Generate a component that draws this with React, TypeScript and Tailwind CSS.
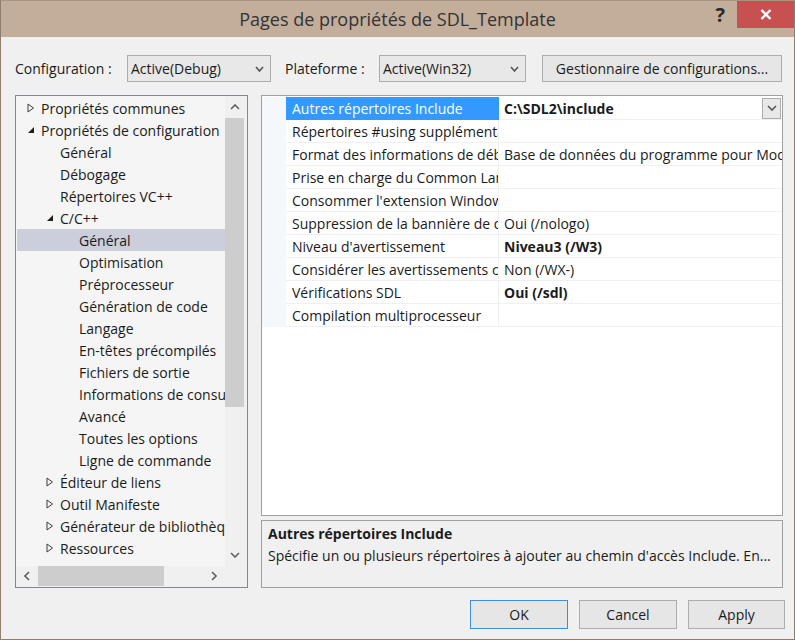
import React from "react";

const font = { fontFamily: '"Open Sans", "Noto Sans", sans-serif' };

function Collapsed() {
  return (
    <svg width="8" height="10" viewBox="0 0 8 10" className="shrink-0">
      <polygon points="1,1 6.5,5 1,9" fill="none" stroke="#3c3c3c" strokeWidth="1" />
    </svg>
  );
}
function Expanded() {
  return (
    <svg width="8" height="10" viewBox="0 0 8 10" className="shrink-0">
      <polygon points="7,2 7,8 1,8" fill="#1e1e1e" />
    </svg>
  );
}
function Chevron({ dir = "down", color = "#606060", w = 10, h = 6 }: { dir?: string; color?: string; w?: number; h?: number }) {
  const paths: Record<string, string> = {
    down: `M1,1 L${w / 2},${h - 1} L${w - 1},1`,
    up: `M1,${h - 1} L${w / 2},1 L${w - 1},${h - 1}`,
  };
  return (
    <svg width={w} height={h} viewBox={`0 0 ${w} ${h}`}>
      <path d={paths[dir]} fill="none" stroke={color} strokeWidth="1.6" />
    </svg>
  );
}
function ChevronSide({ dir }: { dir: "left" | "right" }) {
  return (
    <svg width="6" height="10" viewBox="0 0 6 10">
      <path d={dir === "left" ? "M5,1 L1,5 L5,9" : "M1,1 L5,5 L1,9"} fill="none" stroke="#606060" strokeWidth="1.6" />
    </svg>
  );
}

type TreeItem = { label: string; level: number; icon?: "c" | "e"; selected?: boolean };
const tree: TreeItem[] = [
  { label: "Propriétés communes", level: 0, icon: "c" },
  { label: "Propriétés de configuration", level: 0, icon: "e" },
  { label: "Général", level: 1 },
  { label: "Débogage", level: 1 },
  { label: "Répertoires VC++", level: 1 },
  { label: "C/C++", level: 1, icon: "e" },
  { label: "Général", level: 2, selected: true },
  { label: "Optimisation", level: 2 },
  { label: "Préprocesseur", level: 2 },
  { label: "Génération de code", level: 2 },
  { label: "Langage", level: 2 },
  { label: "En-têtes précompilés", level: 2 },
  { label: "Fichiers de sortie", level: 2 },
  { label: "Informations de consultation", level: 2 },
  { label: "Avancé", level: 2 },
  { label: "Toutes les options", level: 2 },
  { label: "Ligne de commande", level: 2 },
  { label: "Éditeur de liens", level: 1, icon: "c" },
  { label: "Outil Manifeste", level: 1, icon: "c" },
  { label: "Générateur de bibliothèques", level: 1, icon: "c" },
  { label: "Ressources", level: 1, icon: "c" },
];

const rows: { name: string; value: string; bold?: boolean }[] = [
  { name: "Autres répertoires Include", value: "C:\\SDL2\\include", bold: true },
  { name: "Répertoires #using supplémentaires", value: "" },
  { name: "Format des informations de débogage", value: "Base de données du programme pour Modifier et continuer (/ZI)" },
  { name: "Prise en charge du Common Language RunTime", value: "" },
  { name: "Consommer l'extension Windows Runtime", value: "" },
  { name: "Suppression de la bannière de démarrage", value: "Oui (/nologo)" },
  { name: "Niveau d'avertissement", value: "Niveau3 (/W3)", bold: true },
  { name: "Considérer les avertissements comme des erreurs", value: "Non (/WX-)" },
  { name: "Vérifications SDL", value: "Oui (/sdl)", bold: true },
  { name: "Compilation multiprocesseur", value: "" },
];

const indent = ["pl-[10px]", "pl-[29px]", "pl-[48px]"];

export default function App() {
  return (
    <div style={font} className="w-[795px] h-[640px] flex flex-col bg-[#c3ae9b] border-x border-b border-[#8f7d6d] border-t border-t-[#a8937f] text-[14px] text-[#1b1b1b] overflow-hidden">
      {/* Title bar */}
      <div className="h-[36px] shrink-0 grid grid-cols-[1fr_auto_1fr]">
        <div />
        <div className="flex items-center text-[18px] text-[#333] pt-[1px]">Pages de propriétés de SDL_Template</div>
        <div className="flex justify-end items-start">
          <div className="h-[27px] flex items-center pr-[12px] text-[20px] font-bold text-[#2a2a2a] leading-none">?</div>
          <div className="w-[57px] h-[27px] bg-[#c75050] flex items-center justify-center">
            <svg width="12" height="11" viewBox="0 0 12 11">
              <path d="M1.5,1 L10.5,10 M10.5,1 L1.5,10" stroke="#fff" strokeWidth="2.4" />
            </svg>
          </div>
        </div>
      </div>

      {/* Body */}
      <div className="flex-1 bg-[#f0f0f0] flex flex-col pl-[14px] pr-[9px] pt-[18px]">
        {/* Config row */}
        <div className="flex items-center h-[27px]">
          <span className="w-[112px]">Configuration :</span>
          <div className="w-[144px] h-[27px] border border-[#acacac] bg-[#e8e8e8] flex items-center justify-between pl-[3px] pr-[6px]">
            <span>Active(Debug)</span>
            <Chevron w={9} h={6} color="#555" />
          </div>
          <span className="ml-[14px] w-[94px]">Plateforme :</span>
          <div className="w-[147px] h-[27px] border border-[#acacac] bg-[#e8e8e8] flex items-center justify-between pl-[3px] pr-[6px]">
            <span>Active(Win32)</span>
            <Chevron w={9} h={6} color="#555" />
          </div>
          <div className="ml-[16px] w-[240px] h-[27px] border border-[#adadad] bg-[#e6e6e6] flex items-center justify-center">
            Gestionnaire de configurations...
          </div>
        </div>

        {/* Main */}
        <div className="flex mt-[13px] h-[493px]">
          {/* Tree */}
          <div className="w-[233px] h-[493px] border border-[#828790] bg-[#f5f5f5] flex flex-col overflow-hidden">
            <div className="flex flex-1 min-h-0 overflow-hidden">
              <div className="w-[209px] overflow-hidden pt-[1px] pl-[1px]">
                {tree.map((t, i) => (
                  <div
                    key={i}
                    className={`h-[22px] flex items-center whitespace-nowrap ${indent[t.level]} ${t.selected ? "bg-[#cccedb]" : ""}`}
                  >
                    <span className="w-[14px] shrink-0 flex items-center">
                      {t.icon === "c" ? <Collapsed /> : t.icon === "e" ? <Expanded /> : null}
                    </span>
                    <span className="shrink-0">{t.label}</span>
                  </div>
                ))}
              </div>
              <div className="w-[22px] shrink-0 bg-[#f0f0f0] flex flex-col">
                <div className="w-[19px] h-[22px] flex items-center justify-center">
                  <Chevron dir="up" w={10} h={6} />
                </div>
                <div className="w-[19px] h-[289px] bg-[#cdcdcd]" />
                <div className="flex-1" />
                <div className="w-[19px] h-[22px] flex items-center justify-center">
                  <Chevron dir="down" w={10} h={6} />
                </div>
              </div>
            </div>
            <div className="h-[21px] shrink-0 flex bg-[#f0f0f0]">
              <div className="w-[22px] h-[20px] flex items-center justify-center">
                <ChevronSide dir="left" />
              </div>
              <div className="w-[126px] h-[20px] bg-[#cdcdcd]" />
              <div className="flex-1" />
              <div className="w-[22px] h-[20px] flex items-center justify-center">
                <ChevronSide dir="right" />
              </div>
              <div className="w-[22px]" />
            </div>
          </div>

          {/* Right column */}
          <div className="ml-[13px] w-[522px] flex flex-col">
            <div className="h-[422px] border border-[#a0a0a0] bg-white pt-[1px] overflow-hidden">
              {rows.map((r, i) => (
                <div key={i} className="flex h-[23px]">
                  <div className="w-[24px] bg-[#f4f7fc]" />
                  <div
                    className={`w-[213px] pl-[6px] flex items-center overflow-hidden border-b border-r ${
                      i === 0 ? "bg-[#3399ff] text-white border-[#3399ff]" : "border-[#f0f0f0]"
                    }`}
                  >
                    <span className="block w-full overflow-hidden whitespace-nowrap">{r.name}</span>
                  </div>
                  <div className="flex-1 min-w-0 flex items-center border-b border-[#f0f0f0] pl-[5px] overflow-hidden">
                    <span className={`block flex-1 min-w-0 overflow-hidden whitespace-nowrap ${r.bold ? "font-bold" : ""}`}>{r.value}</span>
                    {i === 0 && (
                      <div className="w-[19px] h-[21px] mr-[1px] border border-[#acacac] bg-[#e8e8e8] flex items-center justify-center shrink-0">
                        <Chevron w={10} h={6} color="#555" />
                      </div>
                    )}
                  </div>
                </div>
              ))}
            </div>
            <div className="mt-[4px] h-[68px] border border-[#a0a0a0] bg-[#f0f0f0] px-[6px] pt-[2px]">
              <div className="font-bold leading-[22px]">Autres répertoires Include</div>
              <div className="leading-[22px] whitespace-nowrap">Spécifie un ou plusieurs répertoires à ajouter au chemin d'accès Include. En...</div>
            </div>
          </div>
        </div>

        {/* Buttons */}
        <div className="flex justify-end gap-[11px] mt-[12px]">
          <div className="w-[98px] h-[29px] border border-[#3c8fd8] bg-[#e6e6e6] flex items-center justify-center">OK</div>
          <div className="w-[98px] h-[29px] border border-[#adadad] bg-[#e6e6e6] flex items-center justify-center">Cancel</div>
          <div className="w-[97px] h-[29px] border border-[#adadad] bg-[#e6e6e6] flex items-center justify-center">Apply</div>
        </div>
      </div>
    </div>
  );
}
